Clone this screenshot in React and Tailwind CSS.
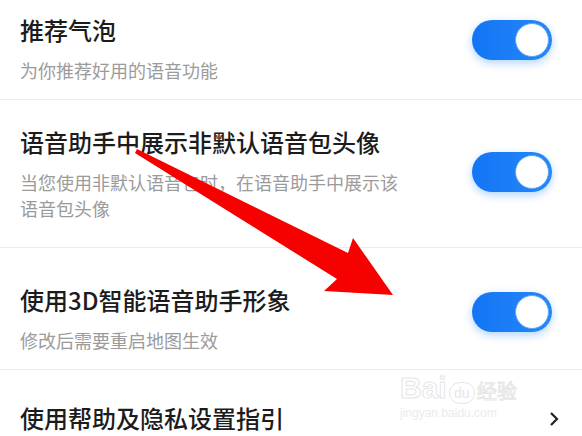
import React from 'react';

const Toggle = ({ className = '' }) => (
  <div className={`relative w-[80px] h-[40px] shrink-0 rounded-full bg-gradient-to-r from-[#1275f5] to-[#2687f8] shadow-[0_3px_8px_rgba(30,128,248,0.35)] ${className}`}>
    <div className="absolute right-[3px] top-[3px] w-[34px] h-[34px] rounded-full bg-white border border-[#5aa7fa]" />
  </div>
);

const Row = ({ title, sub, className = '', toggleClass = '', last, children }) => (
  <div className={`flex items-start pl-[20px] pr-[30px] ${last ? '' : 'border-b border-[#ececec]'} ${className}`}>
    <div className="flex-1 min-w-0">
      <div className="text-[24px] leading-[32px] font-medium text-[#1c1c1c]">{title}</div>
      {sub && <div className="mt-[11px] text-[18px] leading-[26px] text-[#9b9b9b]">{sub}</div>}
    </div>
    {children || <Toggle className={toggleClass} />}
  </div>
);

export default function App() {
  return (
    <div
      className="relative w-[582px] h-[436px] overflow-hidden bg-white"
      style={{ fontFamily: '"Noto Sans CJK SC", "Noto Sans", sans-serif' }}
    >
      <Row title="推荐气泡" sub="为你推荐好用的语音功能" className="pt-[14px] pb-[16px]" toggleClass="mt-[6px]" />
      <Row
        title="语音助手中展示非默认语音包头像"
        sub={<>当您使用非默认语音包时，在语音助手中展示该<br />语音包头像</>}
        className="pt-[26px] pb-[26px]"
        toggleClass="mt-[26px]"
      />
      <Row title="使用3D智能语音助手形象" sub="修改后需要重启地图生效" className="pt-[36px] pb-[16px]" toggleClass="mt-[8px]" />
      <Row title="使用帮助及隐私设置指引" className="pt-[32px] pr-[22px]" last>
        <svg width="12" height="18" viewBox="0 0 12 18" className="mt-[8px] mr-[-8px]">
          <path d="M3 3 L9 9 L3 15" fill="none" stroke="#222" strokeWidth="2.2" />
        </svg>
      </Row>

      {/* watermark */}
      <div className="absolute left-[400px] top-[372px] pointer-events-none" style={{ fontFamily: '"Liberation Sans", sans-serif' }}>
        <div className="flex items-end">
          <span className="text-[30px] leading-[32px] font-bold" style={{ color: 'transparent', WebkitTextStroke: '1px #e6e6e6' }}>Bai</span>
          <span className="ml-[2px] w-[26px] h-[22px] rounded-full border border-[#e6e6e6] text-[14px] leading-[20px] text-center text-[#e6e6e6]">du</span>
          <span className="ml-[2px] text-[20px] leading-[26px]" style={{ color: 'transparent', WebkitTextStroke: '1px #e6e6e6', fontFamily: '"Noto Sans CJK SC", sans-serif' }}>经验</span>
        </div>
        <div className="mt-[2px] text-[12px] leading-[14px] text-[#ebebeb]">jingyan.baidu.com</div>
      </div>

      {/* arrow */}
      <svg className="absolute inset-0 pointer-events-none" width="582" height="436" viewBox="0 0 582 436">
        <polygon
          points="137,149 348,253 353,238 393,295 324,291 337,279 135,153"
          fill="#f60000"
        />
      </svg>
    </div>
  );
}
